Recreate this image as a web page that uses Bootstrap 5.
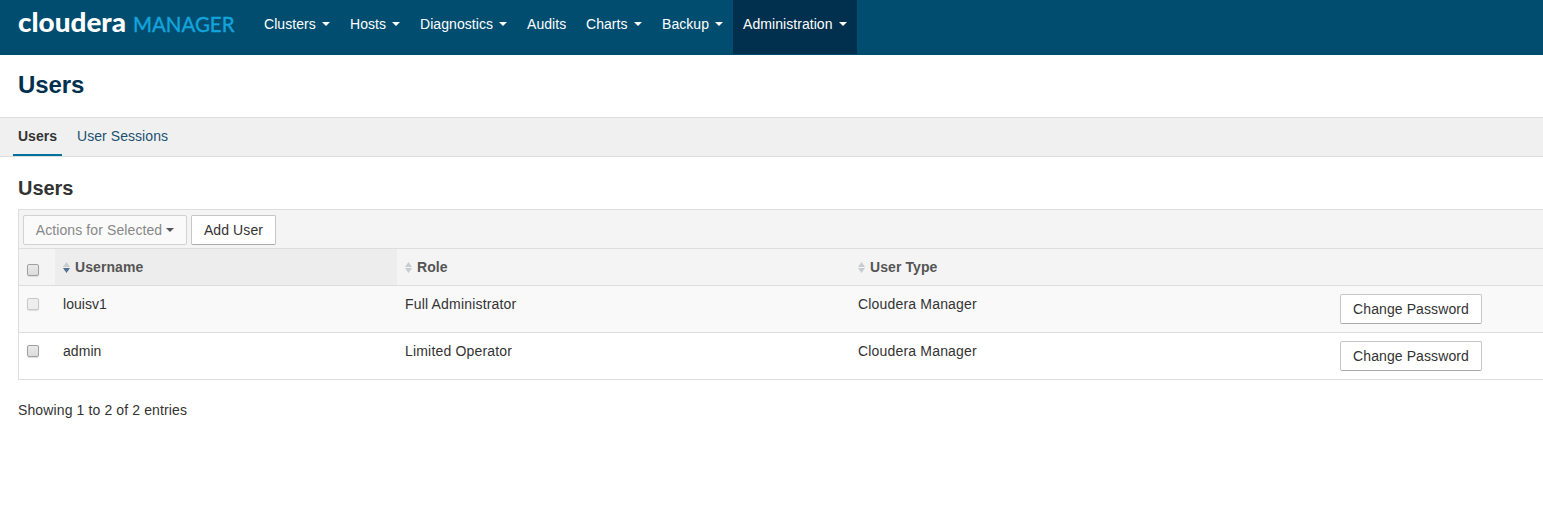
<!DOCTYPE html>
<html lang="en">
<head>
<meta charset="utf-8">
<title>Users - Cloudera Manager</title>
<link href="https://cdn.jsdelivr.net/npm/bootstrap@5.3.0/dist/css/bootstrap.min.css" rel="stylesheet">
<style>
body{font-family:"Liberation Sans",Arial,sans-serif;font-size:14px;line-height:20px;color:#333;letter-spacing:.12px;overflow:hidden;background:#fff}
.topbar{height:55px;background:#004d6f}
.brand-logo{width:254px;height:55px;display:block;flex:none}
.topbar .nav-link{height:54px;padding:14px 0 0 10px;color:#fff;letter-spacing:.06px;white-space:nowrap}
.topbar .nav-link.active{background:#00304e}
.caret{display:inline-block;border-left:4px solid transparent;border-right:4px solid transparent;border-top:4px solid currentColor;vertical-align:middle;margin-left:2px;position:relative;top:-1px}
.w-a{width:86px}.w-b{width:70px}.w-c{width:107px}.w-d{width:59px}.w-e{width:76px}.w-f{width:81px}.w-g{width:124px}
.page-title{height:62px;padding:15px 18px 0;font-size:24px;line-height:30px;font-weight:700;color:#00304e;letter-spacing:-.1px}
.subnav{height:40px;background:#f0f0f0;border-top:1px solid #ddd;border-bottom:1px solid #ddd;padding-left:13px}
.subnav a{height:38px;padding:8px 5px 0;color:#1b5170;text-decoration:none;margin-right:10px;letter-spacing:.06px}
.subnav a.active{font-weight:700;color:#333;border-bottom:2px solid #00709c;width:49px;letter-spacing:0}
.section-title{font-size:20px;line-height:24px;font-weight:700;margin:19px 0 9px 18px;letter-spacing:-.05px}
.panel{margin-left:18px;border-left:1px solid #ddd;border-top:1px solid #ddd;width:1525px}
.tools{height:38px;background:#f4f4f4;padding:5px 4px 0;gap:4px}
.btn-plain{--bs-btn-font-size:14px;height:30px;padding:4px 0;line-height:20px;border:1px solid #c6c6c6;border-bottom-color:#aaa;border-radius:2px;background:#fff;color:#333;letter-spacing:.1px;white-space:nowrap}
.btn-plain:disabled{background:#fafafa;color:#888;border-color:#d2d2d2;opacity:1}
.btn-plain .caret{color:#555;margin:0 0 0 0}
.bt1{width:164px}.bt2{width:85px}.bt3{width:142px}
.users-table{table-layout:fixed;width:1524px;margin:0;color:#333;border-collapse:separate;border-spacing:0}
.users-table>*>tr>*{padding:8px;border:0;border-top:1px solid #ddd;background:transparent;box-shadow:none;vertical-align:top}
.users-table th{height:37px;background:#f4f4f4!important;color:#555;letter-spacing:.08px}
.users-table th.sorted{background:#ededed!important}
.users-table td{height:47px;letter-spacing:.18px}
.users-table td:nth-child(2){letter-spacing:.05px}
.users-table tbody tr:first-child td{background:#f9f9f9}
.users-table tbody tr:last-child td{height:48px;border-bottom:1px solid #ddd}
.users-table input{appearance:none;display:block;width:12px;height:12px;margin:4px 0 0;border:1px solid #a0a0a0;border-radius:2px;background:linear-gradient(#e9e9e9,#dcdcdc);box-shadow:0 1px 1px #ddd}
.users-table th input{margin-top:7px}
.users-table input:disabled{border-color:#c8c8c8;background:#eee}
.sort{width:7px;height:11px;margin-right:5px;vertical-align:-1px}
.entries{margin:20px 0 0 18px}
</style>
</head>
<body>
<header class="topbar d-flex">
<svg class="brand-logo" viewBox="0 0 254 55" role="img" aria-label="Cloudera Manager">
<text x="18" y="31.5" font-family="Lato, sans-serif" font-weight="900" font-size="27" fill="#fff" letter-spacing="0" textLength="108" lengthAdjust="spacingAndGlyphs">cloudera</text>
<text x="133" y="31.5" font-family="Lato, sans-serif" font-weight="400" font-size="20.8" fill="#12a4dc" stroke="#12a4dc" stroke-width=".4" letter-spacing="0" textLength="101.5" lengthAdjust="spacingAndGlyphs">MANAGER</text>
</svg>
<nav class="nav flex-nowrap">
<a class="nav-link w-a" href="#">Clusters <span class="caret"></span></a>
<a class="nav-link w-b" href="#">Hosts <span class="caret"></span></a>
<a class="nav-link w-c" href="#">Diagnostics <span class="caret"></span></a>
<a class="nav-link w-d" href="#">Audits</a>
<a class="nav-link w-e" href="#">Charts <span class="caret"></span></a>
<a class="nav-link w-f" href="#">Backup <span class="caret"></span></a>
<a class="nav-link w-g active" href="#">Administration <span class="caret"></span></a>
</nav>
</header>
<h1 class="page-title m-0">Users</h1>
<nav class="subnav d-flex"><a class="active" href="#">Users</a><a href="#">User Sessions</a></nav>
<main>
<h2 class="section-title">Users</h2>
<div class="panel">
<div class="tools d-flex">
<button class="btn btn-plain bt1" disabled>Actions for Selected <span class="caret"></span></button>
<button class="btn btn-plain bt2">Add User</button>
</div>
<table class="table users-table">
<colgroup><col style="width:36px"><col style="width:342px"><col style="width:453px"><col style="width:482px"><col></colgroup>
<thead><tr>
<th><input type="checkbox" aria-label="Select all"></th>
<th class="sorted"><svg class="sort" viewBox="0 0 7 11"><path d="M0 5L3.5 0L7 5Z" fill="#c8ccd0"/><path d="M0 6H7L3.5 11Z" fill="#4f7090"/></svg>Username</th>
<th><svg class="sort" viewBox="0 0 7 11"><path d="M0 5L3.5 0L7 5ZM0 6H7L3.5 11Z" fill="#c8ccd0"/></svg>Role</th>
<th><svg class="sort" viewBox="0 0 7 11"><path d="M0 5L3.5 0L7 5ZM0 6H7L3.5 11Z" fill="#c8ccd0"/></svg>User Type</th>
<th></th>
</tr></thead>
<tbody>
<tr><td><input type="checkbox" disabled aria-label="louisv1"></td><td>louisv1</td><td>Full Administrator</td><td>Cloudera Manager</td><td><button class="btn btn-plain bt3">Change Password</button></td></tr>
<tr><td><input type="checkbox" aria-label="admin"></td><td>admin</td><td>Limited Operator</td><td>Cloudera Manager</td><td><button class="btn btn-plain bt3">Change Password</button></td></tr>
</tbody>
</table>
</div>
<p class="entries">Showing 1 to 2 of 2 entries</p>
</main>
<script src="https://cdn.jsdelivr.net/npm/bootstrap@5.3.0/dist/js/bootstrap.bundle.min.js"></script>
</body>
</html>
